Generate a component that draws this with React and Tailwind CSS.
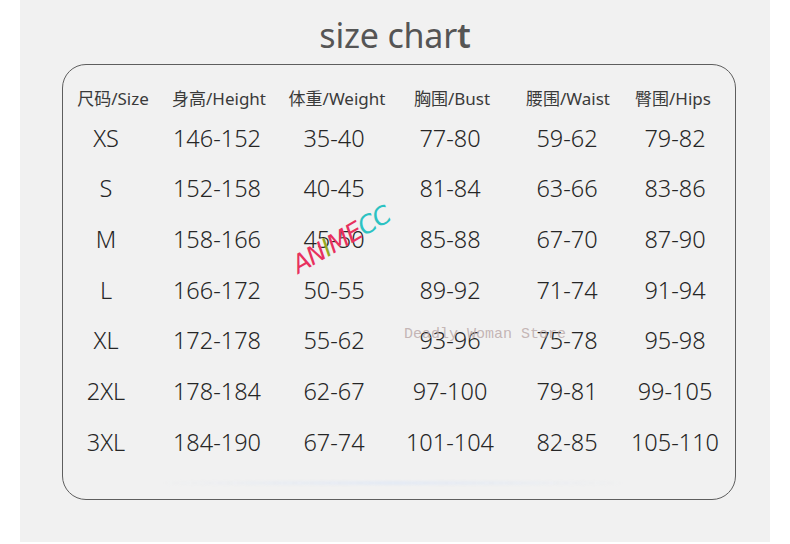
const rows = [
  ["XS", "146-152", "35-40", "77-80", "59-62", "79-82"],
  ["S", "152-158", "40-45", "81-84", "63-66", "83-86"],
  ["M", "158-166", "45-50", "85-88", "67-70", "87-90"],
  ["L", "166-172", "50-55", "89-92", "71-74", "91-94"],
  ["XL", "172-178", "55-62", "93-96", "75-78", "95-98"],
  ["2XL", "178-184", "62-67", "97-100", "79-81", "99-105"],
  ["3XL", "184-190", "67-74", "101-104", "82-85", "105-110"],
];

const gridCols = "grid grid-cols-[86px_136px_98px_134px_100px_116px]";

export default function App() {
  return (
    <div
      className="w-[790px] h-[544px] bg-white overflow-hidden"
      style={{ fontFamily: '"Noto Sans", "Noto Sans CJK SC", sans-serif' }}
    >
      <div className="ml-[20px] w-[750px] h-[542px] bg-[#f1f1f1] flex flex-col items-center">
        <div className="mt-[12px] h-[46px] flex items-center text-[34px] leading-none text-[#555555] tracking-[-0.2px]">
          <span>size char</span>
          <span className="font-semibold">t</span>
        </div>
        <div className="relative mt-[6px] ml-[8px] w-[674px] h-[436px] border-[1.5px] border-[#5e5e5e] rounded-[24px]">
          <div className={`${gridCols} mt-[21px] h-[24px] items-center text-[17px] text-[#3a3a3a] whitespace-nowrap`}>
            <div className="flex justify-center pl-[14px]">尺码/Size</div>
            <div className="flex justify-center pl-[4px]">身高/Height</div>
            <div className="flex justify-center pl-[6px]">体重/Weight</div>
            <div className="flex justify-center pl-[4px]">胸围/Bust</div>
            <div className="flex justify-center pl-[2px]">腰围/Waist</div>
            <div className="flex justify-center pr-[4px]">臀围/Hips</div>
          </div>
          <div className="mt-[3px]">
            {rows.map((r) => (
              <div
                key={r[0]}
                className={`${gridCols} h-[50.7px] items-center text-[23.5px] font-light text-[#262626] whitespace-nowrap`}
              >
                {r.map((c, i) => (
                  <div key={i} className="flex justify-center">
                    {c}
                  </div>
                ))}
              </div>
            ))}
          </div>

          <div className="absolute left-[100px] top-[416px] w-[460px] h-[4px] rounded-full bg-gradient-to-r from-transparent via-[#e4eaf4] to-transparent blur-[1px]" />

          <div
            className="absolute left-[228px] top-[154px] w-[100px] h-[40px] flex items-center justify-center -rotate-[30deg] italic text-[25px] leading-none tracking-[-1px]"
            style={{ fontFamily: '"DejaVu Sans", sans-serif', fontWeight: 300 }}
          >
            <span className="text-[#e8305e]">A</span>
            <span className="text-[#e8305e]">N</span>
            <span className="text-[#96a820]">I</span>
            <span className="text-[#e8305e]">M</span>
            <span className="text-[#e8305e]">E</span>
            <span className="text-[#2cc2c2]">C</span>
            <span className="text-[#2cc2c2]">C</span>
          </div>

          <div
            className="absolute left-[341px] top-[262px] h-[16px] leading-none text-[15px] text-[#b8a6a6]/80 whitespace-pre"
            style={{ fontFamily: '"Liberation Mono", monospace' }}
          >
            Deadly Woman Store
          </div>
        </div>
      </div>
    </div>
  );
}
